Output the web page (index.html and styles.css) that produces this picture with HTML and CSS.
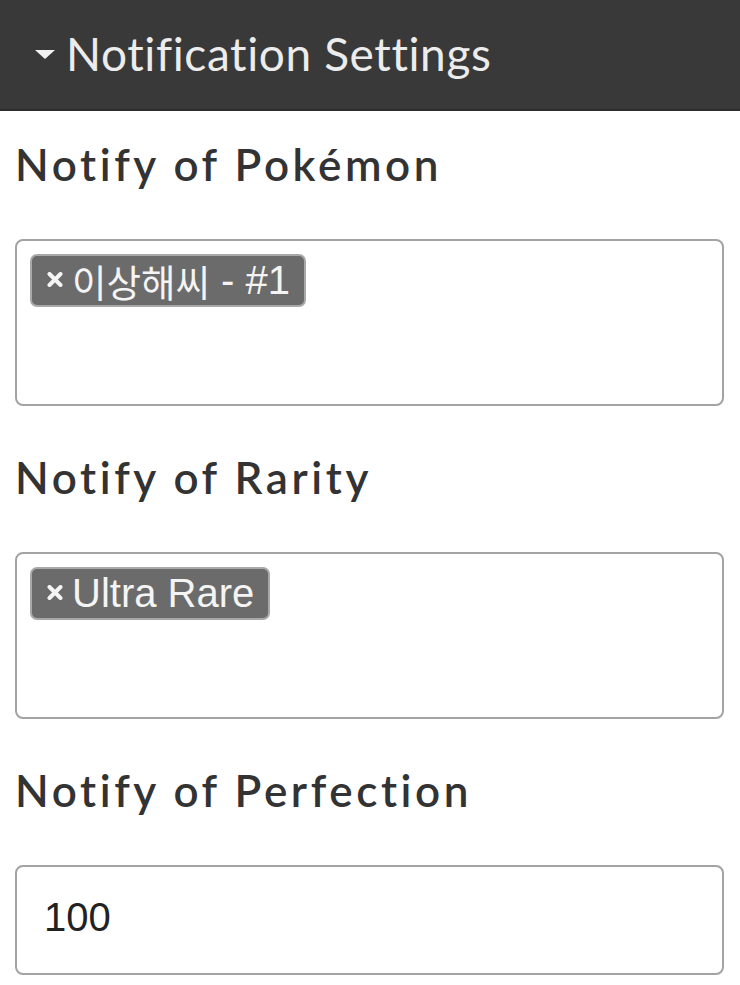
FILE: index.html
```html
<!DOCTYPE html>
<html>
<head>
<meta charset="utf-8">
<link rel="stylesheet" href="styles.css">
</head>
<body>
<div class="header">
  <span class="caret"></span>
  <span class="title">Notification Settings</span>
</div>
<div class="content">
  <div class="field first">
    <div class="label">Notify of Pokémon</div>
    <div class="box tall">
      <span class="chip"><svg class="x" width="16" height="15" viewBox="0 0 16 15"><path d="M2.5 2 L13.5 13 M13.5 2 L2.5 13" stroke="#f4f4f4" stroke-width="4" stroke-linecap="round"/></svg><span class="ko">이상해씨</span>&nbsp;- #1</span>
    </div>
  </div>
  <div class="field">
    <div class="label">Notify of Rarity</div>
    <div class="box tall">
      <span class="chip"><svg class="x" width="16" height="15" viewBox="0 0 16 15"><path d="M2.5 2 L13.5 13 M13.5 2 L2.5 13" stroke="#f4f4f4" stroke-width="4" stroke-linecap="round"/></svg>Ultra Rare</span>
    </div>
  </div>
  <div class="field">
    <div class="label">Notify of Perfection</div>
    <div class="box input">100</div>
  </div>
</div>
</body>
</html>
```
FILE: styles.css
```css
html, body {
  margin: 0;
  padding: 0;
  background: #ffffff;
}
body {
  width: 740px;
  height: 985px;
  overflow: hidden;
}
.header {
  height: 111px;
  background: #393939;
  border-bottom: 2px solid #2c2c2c;
  display: flex;
  align-items: center;
  padding-left: 35px;
  box-sizing: border-box;
}
.caret {
  width: 0;
  height: 0;
  border-left: 10px solid transparent;
  border-right: 10px solid transparent;
  border-top: 9px solid #f2f2f2;
  margin-right: 11px;
}
.title {
  font-family: Lato, "Noto Sans", sans-serif;
  font-size: 46px;
  color: #ececec;
  letter-spacing: 0.6px;
  line-height: 1;
  margin-top: -2px;
}
.content {
  padding: 0 16px 0 15px;
}
.field {
  display: flex;
  flex-direction: column;
  padding-top: 49px;
}
.field.first {
  padding-top: 31px;
}
.label {
  font-family: Lato, "Noto Sans", sans-serif;
  font-size: 44px;
  font-weight: 600;
  color: #333333;
  letter-spacing: 3.6px;
  line-height: 44px;
  margin-left: 0;
  margin-bottom: 53px;
}
.box {
  border: 2px solid #a3a3a3;
  border-radius: 8px;
  box-sizing: border-box;
  width: 709px;
}
.tall {
  height: 167px;
  padding: 13px 0 0 13px;
}
.chip {
  display: inline-flex;
  align-items: center;
  height: 53px;
  box-sizing: border-box;
  background: #6b6b6b;
  border: 2px solid #a9a9a9;
  border-radius: 7px;
  padding: 0 14px 1px 15px;
  font-family: "Liberation Sans", Arial, "Noto Sans CJK KR", sans-serif;
  font-size: 40px;
  color: #f4f4f4;
}
.ko {
  font-family: "Noto Sans CJK KR", sans-serif;
  font-size: 37.5px;
}
.x {
  display: block;
  margin-right: 9px;
  margin-top: -2px;
}
.input {
  height: 110px;
  display: flex;
  align-items: center;
  padding-left: 27px;
  padding-bottom: 5px;
  font-family: "Liberation Sans", Arial, sans-serif;
  font-size: 40px;
  color: #222222;
}
```
